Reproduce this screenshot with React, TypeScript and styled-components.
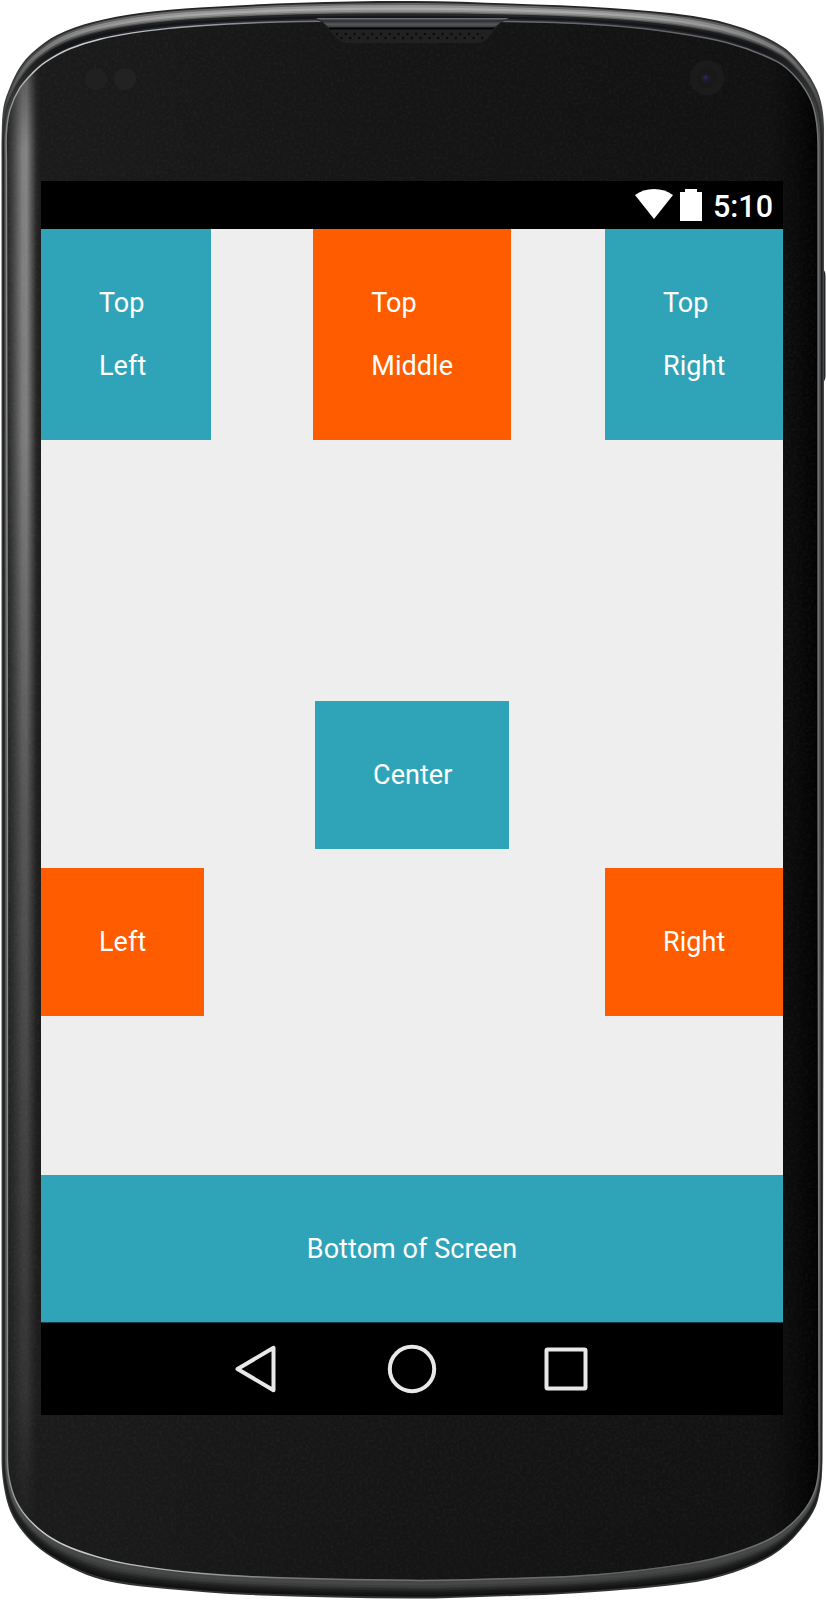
import React from "react";
import styled, { createGlobalStyle } from "styled-components";

const GlobalStyle = createGlobalStyle`
  body { margin: 0; background: #fff; }
  * { box-sizing: border-box; }
`;

const TEAL = "#2fa4b9";
const ORANGE = "#ff5c00";

const Device = styled.main`
  position: relative;
  width: 826px;
  height: 1600px;
  padding: 181px 43px 185px 41px;
  overflow: hidden;
  font-family: Roboto, "Liberation Sans", sans-serif;
`;

const Casing = styled.svg`
  position: absolute;
  inset: 0;
  width: 826px;
  height: 1600px;
`;

const Screen = styled.section`
  position: relative;
  display: flex;
  flex-direction: column;
  height: 1234px;
  background: #eee;
`;

const StatusBar = styled.header`
  display: flex;
  justify-content: flex-end;
  height: 47.5px;
  padding: 8px 10px 0 0;
  background: #000;
`;

const StatusIcons = styled.svg`
  width: 68px;
  height: 33px;
  margin-right: 9.5px;
`;

const Clock = styled.time`
  color: #fff;
  font-size: 30.5px;
  font-weight: 500;
  line-height: 36px;
`;

const TopRow = styled.div`
  display: grid;
  grid-template-columns: 1fr auto 1fr;
  height: 211.5px;
`;

const CenterRow = styled.div`
  display: flex;
  justify-content: center;
  margin-top: 261px;
`;

const SideRow = styled.div`
  display: flex;
  justify-content: space-between;
  margin-top: 19.5px;
`;

const Tile = styled.div<{ $color: string; $width: number; $tall?: boolean; $end?: boolean }>`
  display: flex;
  flex-direction: column;
  justify-content: space-between;
  justify-self: ${(p) => (p.$end ? "end" : "start")};
  width: ${(p) => p.$width}px;
  height: ${(p) => (p.$tall ? 211.5 : 147.5)}px;
  padding: 58px 0 58px 58px;
  background: ${(p) => p.$color};
`;

const Label = styled.span`
  color: #fff;
  font-size: 27px;
  line-height: 32px;
  letter-spacing: 0.06px;
  white-space: nowrap;
`;

const BottomTile = styled.div`
  display: flex;
  align-items: center;
  justify-content: center;
  height: 147px;
  margin-top: auto;
  background: ${TEAL};
`;

const NavBar = styled.nav`
  display: flex;
  flex: none;
  align-items: center;
  justify-content: center;
  gap: 104px;
  height: 93px;
  padding-bottom: 1px;
  border-top: 1px solid #124049;
  background: #000;
`;

const NavIcon = styled.svg`
  width: 50px;
  height: 50px;
  fill: none;
  stroke: #e8e8e8;
  stroke-width: 4;
  stroke-linejoin: round;
`;

type Point = [number, number];

const OUTER: Point[] = [
  [1.5, 160], [1.7, 133], [3.5, 107], [10, 87], [20, 67], [33, 52], [57, 35], [93, 22], [140, 13], [200, 7.5], [300, 2.7], [413, 1],
  [510, 3.5], [610, 8], [693, 16], [743, 28], [783, 47], [803, 67], [817, 90], [823, 113], [824, 145],
  [824, 800], [822.5, 1460], [818, 1500], [806, 1523], [780, 1550], [746, 1568], [696, 1582], [580, 1593], [480, 1597], [413, 1598.5],
  [250, 1595], [167, 1589], [117, 1583], [87, 1575], [53, 1558], [30, 1540], [13, 1517], [5, 1493], [1.5, 1460], [1.5, 800],
];

const INNER: Point[] = [
  [6.5, 160], [6.5, 133], [10, 110], [20, 88], [33, 73], [46, 62], [70, 49], [100, 39.5], [145, 31.5], [200, 26], [300, 21.8], [413, 21.5],
  [510, 21.8], [590, 24.5], [660, 31], [727, 43], [777, 62], [797, 79], [811, 101], [816.5, 123], [818, 150],
  [818, 800], [819, 1460], [815, 1490], [800, 1515], [773, 1537], [733, 1553], [690, 1563], [600, 1574], [500, 1578.5], [413, 1580],
  [280, 1577.5], [200, 1573], [130, 1564], [96, 1556], [65, 1545], [43, 1532], [23, 1512], [12, 1490], [7.5, 1460], [7.5, 800],
];

// Smooth closed outline between the casing edge (t = 0) and the glass (t = 1).
function outline(t: number): string {
  const pts = OUTER.map(([x, y], i): Point => [x + (INNER[i][0] - x) * t, y + (INNER[i][1] - y) * t]);
  const n = pts.length;
  let d = `M${pts[0][0]} ${pts[0][1]}`;
  for (let i = 0; i < n; i++) {
    const a = pts[(i + n - 1) % n];
    const b = pts[i];
    const c = pts[(i + 1) % n];
    const e = pts[(i + 2) % n];
    if (Math.abs(c[1] - b[1]) > 300) {
      d += `L${c[0]} ${c[1]}`;
      continue;
    }
    const span = Math.hypot(c[0] - b[0], c[1] - b[1]);
    const before = Math.hypot(c[0] - a[0], c[1] - a[1]);
    const after = Math.hypot(e[0] - b[0], e[1] - b[1]);
    const k1 = Math.min(span / 3 / before, 0.3);
    const k2 = Math.min(span / 3 / after, 0.3);
    d += `C${b[0] + (c[0] - a[0]) * k1} ${b[1] + (c[1] - a[1]) * k1} ${c[0] - (e[0] - b[0]) * k2} ${c[1] - (e[1] - b[1]) * k2} ${c[0]} ${c[1]}`;
  }
  return d + "Z";
}

// Rim shading: depth, colour at the top, near the top corners, along the sides, at the bottom.
const RIM: [number, string, string, string, string][] = [
  [0, "#252525", "#333", "#4b4d4d", "#333"],
  [0.1, "#666", "#4a4a4a", "#3b3d3d", "#111"],
  [0.2, "#949494", "#777", "#292b2b", "#161616"],
  [0.32, "#aaa", "#777", "#1d2020", "#1d1e1e"],
  [0.43, "#919191", "#484848", "#222525", "#292b2b"],
  [0.53, "#6c6c6c", "#202020", "#353838", "#343636"],
  [0.6, "#252628", "#151618", "#555", "#3d3f3f"],
  [0.72, "#16171a", "#121315", "#555858", "#464848"],
  [0.86, "#303136", "#1c1d20", "#444", "#454747"],
];

const holes: Point[] = [];
for (let i = 0; i < 17; i++) {
  holes.push([337 + i * 8.8, 34]);
  holes.push([341.5 + i * 8.8, 38]);
}

function DeviceCasing() {
  return (
    <Casing viewBox="0 0 826 1600" aria-hidden="true">
      <defs>
        {RIM.map(([t, top, corner, side, bottom]) => (
          <linearGradient key={t} id={`rim${t * 100}`} gradientUnits="userSpaceOnUse" x1="0" y1="0" x2="0" y2="1600">
            <stop offset="0.008" stopColor={top} />
            <stop offset="0.03" stopColor={corner} />
            <stop offset="0.09" stopColor={side} />
            <stop offset="0.91" stopColor={side} />
            <stop offset="0.97" stopColor={bottom} />
          </linearGradient>
        ))}
        <linearGradient id="edge" gradientUnits="userSpaceOnUse" x1="0" y1="0" x2="826" y2="0">
          <stop offset="0" stopColor="#777b77" />
          <stop offset="0.04" stopColor="#c5c5c5" />
          <stop offset="0.12" stopColor="#c9cdd0" />
          <stop offset="0.35" stopColor="#75777c" />
          <stop offset="0.8" stopColor="#606266" />
          <stop offset="1" stopColor="#747478" />
        </linearGradient>
        <linearGradient id="glass" gradientUnits="userSpaceOnUse" x1="0" y1="0" x2="826" y2="0">
          <stop offset="0.05" stopColor="#1b1b1b" />
          <stop offset="0.5" stopColor="#151515" />
          <stop offset="0.93" stopColor="#121212" />
          <stop offset="0.965" stopColor="#0a0a0a" />
          <stop offset="0.99" stopColor="#020202" />
        </linearGradient>
        <linearGradient id="bevel" gradientUnits="userSpaceOnUse" x1="7" y1="0" x2="41" y2="0">
          <stop offset="0" stopColor="#232323" />
          <stop offset="0.2" stopColor="#4a4a4a" />
          <stop offset="0.45" stopColor="#858585" />
          <stop offset="0.58" stopColor="#8a8a8a" />
          <stop offset="0.74" stopColor="#505050" />
          <stop offset="0.86" stopColor="#282828" />
          <stop offset="1" stopColor="#1b1b1b" />
        </linearGradient>
        <linearGradient id="bevelFade" gradientUnits="userSpaceOnUse" x1="0" y1="60" x2="0" y2="1540">
          <stop offset="0" stopColor="#fff" stopOpacity="0.5" />
          <stop offset="0.06" stopColor="#fff" stopOpacity="0.95" />
          <stop offset="0.25" stopColor="#fff" stopOpacity="0.9" />
          <stop offset="0.5" stopColor="#fff" stopOpacity="0.55" />
          <stop offset="0.9" stopColor="#fff" stopOpacity="0.22" />
          <stop offset="1" stopColor="#fff" stopOpacity="0" />
        </linearGradient>
        <linearGradient id="lip" x1="0" y1="0" x2="0" y2="1">
          <stop offset="0" stopColor="#77797c" />
          <stop offset="0.3" stopColor="#2b2c2f" />
          <stop offset="0.65" stopColor="#56585b" />
          <stop offset="1" stopColor="#3a3b3d" />
        </linearGradient>
        <mask id="bevelMask">
          <rect x="0" y="60" width="42" height="1480" fill="url(#bevelFade)" />
        </mask>
        <clipPath id="glassClip">
          <path d={outline(1)} />
        </clipPath>
        <filter id="grain" x="0" y="0" width="100%" height="100%">
          <feTurbulence type="fractalNoise" baseFrequency="0.35" numOctaves="2" seed="4" />
          <feColorMatrix values="0 0 0 0 1  0 0 0 0 1  0 0 0 0 1  0.16 0 0 0 -0.06" />
        </filter>
      </defs>

      <path d="M822 269 Q825.5 270 825.5 276 V376 Q825.5 381 822 383Z" fill="#252628" />
      {RIM.map(([t]) => (
        <path key={t} d={outline(t)} fill={`url(#rim${t * 100})`} />
      ))}
      <path d={outline(1)} fill="url(#glass)" />

      <g clipPath="url(#glassClip)">
        <rect x="5" y="60" width="36" height="1480" fill="url(#bevel)" mask="url(#bevelMask)" />
        <rect width="826" height="1600" filter="url(#grain)" opacity="0.45" />
      </g>
      <path d={outline(0.98)} fill="none" stroke="url(#edge)" strokeWidth="1.5" />

      <path d="M316 20 H508 C501 20 497 28 492 33 L487 39 Q483 43 477 43 H347 Q341 43 337 39 L331 32 C326 27 323 21 316 20Z" fill="#212121" />
      <path d="M316 18 H509 L503 20.5 L494 27.5 H329 L321 20.5Z" fill="url(#lip)" />
      <path d="M329 28.5 H494" stroke="#060606" strokeWidth="2" />
      {holes.map(([x, y]) => (
        <circle key={`${x}-${y}`} cx={x} cy={y} r="1.2" fill="#0b0b0b" />
      ))}

      <circle cx="96" cy="79" r="11" fill="#202020" />
      <circle cx="125" cy="79" r="11" fill="#222" />
      <circle cx="707" cy="78" r="17.5" fill="#1b1b1b" />
      <circle cx="707" cy="78" r="10" fill="#191919" />
      <circle cx="706" cy="78" r="5" fill="#1c1b2b" />
      <circle cx="705.5" cy="77.5" r="2.3" fill="#28264b" />
    </Casing>
  );
}

export default function App() {
  return (
    <>
      <GlobalStyle />
      <Device>
        <DeviceCasing />
        <Screen>
          <StatusBar>
            <StatusIcons viewBox="0 0 68 33" fill="#fff">
              <path d="M0 6 Q8 0 19 0 Q30 0 38 6 L19 30Z" />
              <path d="M50 0 H62 V3 H67 V32 H45 V3 H50Z" />
            </StatusIcons>
            <Clock>5:10</Clock>
          </StatusBar>
          <TopRow>
            <Tile $color={TEAL} $width={170} $tall>
              <Label>Top</Label>
              <Label>Left</Label>
            </Tile>
            <Tile $color={ORANGE} $width={197.5} $tall>
              <Label>Top</Label>
              <Label>Middle</Label>
            </Tile>
            <Tile $color={TEAL} $width={178} $tall $end>
              <Label>Top</Label>
              <Label>Right</Label>
            </Tile>
          </TopRow>
          <CenterRow>
            <Tile $color={TEAL} $width={194}>
              <Label>Center</Label>
            </Tile>
          </CenterRow>
          <SideRow>
            <Tile $color={ORANGE} $width={163.3}>
              <Label>Left</Label>
            </Tile>
            <Tile $color={ORANGE} $width={178}>
              <Label>Right</Label>
            </Tile>
          </SideRow>
          <BottomTile>
            <Label>Bottom of Screen</Label>
          </BottomTile>
          <NavBar>
            <NavIcon viewBox="0 0 50 50">
              <path d="M4.5 25 L40.5 3.8 V46.2Z" />
            </NavIcon>
            <NavIcon viewBox="0 0 50 50">
              <circle cx="25" cy="25" r="22.2" />
            </NavIcon>
            <NavIcon viewBox="0 0 50 50">
              <rect x="5.5" y="5.5" width="39" height="39" rx="1" />
            </NavIcon>
          </NavBar>
        </Screen>
      </Device>
    </>
  );
}
